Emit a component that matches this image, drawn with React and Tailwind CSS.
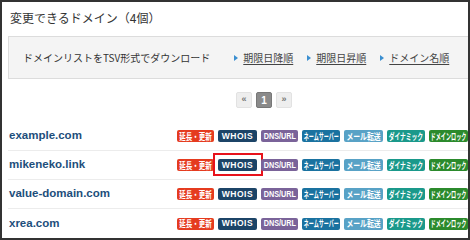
import React from 'react';

const JP = { fontFamily: '"Noto Sans CJK JP", "Noto Sans", sans-serif' };

const badges = [
    { label: '延長・更新', bg: 'bg-[#e53b1f]', w: 'w-[37px]', scale: 'scale-x-[0.72]', text: 'text-[9px]' },
    { label: 'WHOIS', bg: 'bg-[#1c4467]', w: 'w-[39px]', scale: 'scale-x-[1]', text: 'text-[8.5px] tracking-[0.5px]', latin: true },
    { label: 'DNS/URL', bg: 'bg-[#7a6399]', w: 'w-[37px]', scale: 'scale-x-[0.85]', text: 'text-[8.5px]', latin: true },
    { label: 'ネームサーバー', bg: 'bg-[#1a72a0]', w: 'w-[38px]', scale: 'scale-x-[0.56]', text: 'text-[9px]' },
    { label: 'メール転送', bg: 'bg-[#58a2c6]', w: 'w-[39px]', scale: 'scale-x-[0.76]', text: 'text-[9px]' },
    { label: 'ダイナミック', bg: 'bg-[#1a998b]', w: 'w-[38px]', scale: 'scale-x-[0.64]', text: 'text-[9px]' },
    { label: 'ドメインロック', bg: 'bg-[#2b8a2c]', w: 'w-[39px]', scale: 'scale-x-[0.57]', text: 'text-[9px]' },
];

const domains = ['example.com', 'mikeneko.link', 'value-domain.com', 'xrea.com'];

const SortLink = ({ label, className }) => (
    <div className={`flex items-center ${className}`}>
        <span className="w-0 h-0 border-y-[3px] border-y-transparent border-l-[4px] border-l-[#3b8fd0]" />
        <span className="ml-[5px] text-[10px] text-[#444] underline underline-offset-2">{label}</span>
    </div>
);

const Badge = ({ b, highlight }) => (
    <div className={`relative shrink-0 h-[12px] ${b.w} ${b.bg} rounded-[2px] flex justify-center items-center`}>
        <span
            className={`inline-block whitespace-nowrap text-white leading-none font-bold ${b.text} ${b.scale}`}
            style={b.latin ? { fontFamily: '"Liberation Sans", Arial, sans-serif' } : JP}
        >
            {b.label}
        </span>
        {highlight && <div className="absolute -left-[5px] -right-[6px] -top-[6px] -bottom-[5px] border-2 border-[#e8121b]" />}
    </div>
);

const App = () => {
    return (
        <div className="w-[470px] h-[240px] border-2 border-[#333] bg-white overflow-hidden pl-[6px]" style={JP}>
            <h1 className="pt-[7px] pl-[2px] text-[12px] leading-[17px] font-normal text-[#333] mb-[10px]">変更できるドメイン（4個）</h1>

            <div className="h-[43px] bg-[#f4f4f4] border-y border-l border-[#dcdcdc] flex items-center pl-[14px]">
                <span className="text-[10px] text-[#333]">ドメインリストをTSV形式でダウンロード</span>
                <SortLink label="期限日降順" className="ml-[24px]" />
                <SortLink label="期限日昇順" className="ml-[14px]" />
                <SortLink label="ドメイン名順" className="ml-[14px]" />
            </div>

            <div className="flex gap-[4px] pl-[228px] mt-[13px] mb-[14px]">
                <div className="w-[16px] h-[16px] bg-[#eeeeee] border border-[#e2e2e2] rounded-[2px] flex items-center justify-center text-[9px] text-[#777] font-bold" style={{ fontFamily: '"Liberation Sans", sans-serif' }}>«</div>
                <div className="w-[16px] h-[16px] bg-[#8a8a8a] border border-[#777] rounded-[2px] flex items-center justify-center text-[10px] text-white font-bold" style={{ fontFamily: '"Liberation Sans", sans-serif' }}>1</div>
                <div className="w-[16px] h-[16px] bg-[#eeeeee] border border-[#e2e2e2] rounded-[2px] flex items-center justify-center text-[9px] text-[#777] font-bold" style={{ fontFamily: '"Liberation Sans", sans-serif' }}>»</div>
            </div>

            <div>
                {domains.map((d, i) => (
                    <div
                        key={d}
                        className={`flex items-center pl-[1px] ${i < domains.length - 1 ? 'h-[29px] border-b border-[#ececec]' : 'h-[29px]'}`}
                    >
                        <span className="text-[11.5px] font-bold text-[#1d4e7b]" style={{ fontFamily: '"Liberation Sans", Arial, sans-serif' }}>{d}</span>
                        <div className="ml-auto flex gap-[4px]">
                            {badges.map((b, j) => (
                                <Badge key={b.label} b={b} highlight={i === 1 && j === 1} />
                            ))}
                        </div>
                    </div>
                ))}
            </div>
        </div>
    );
};

export default App;
